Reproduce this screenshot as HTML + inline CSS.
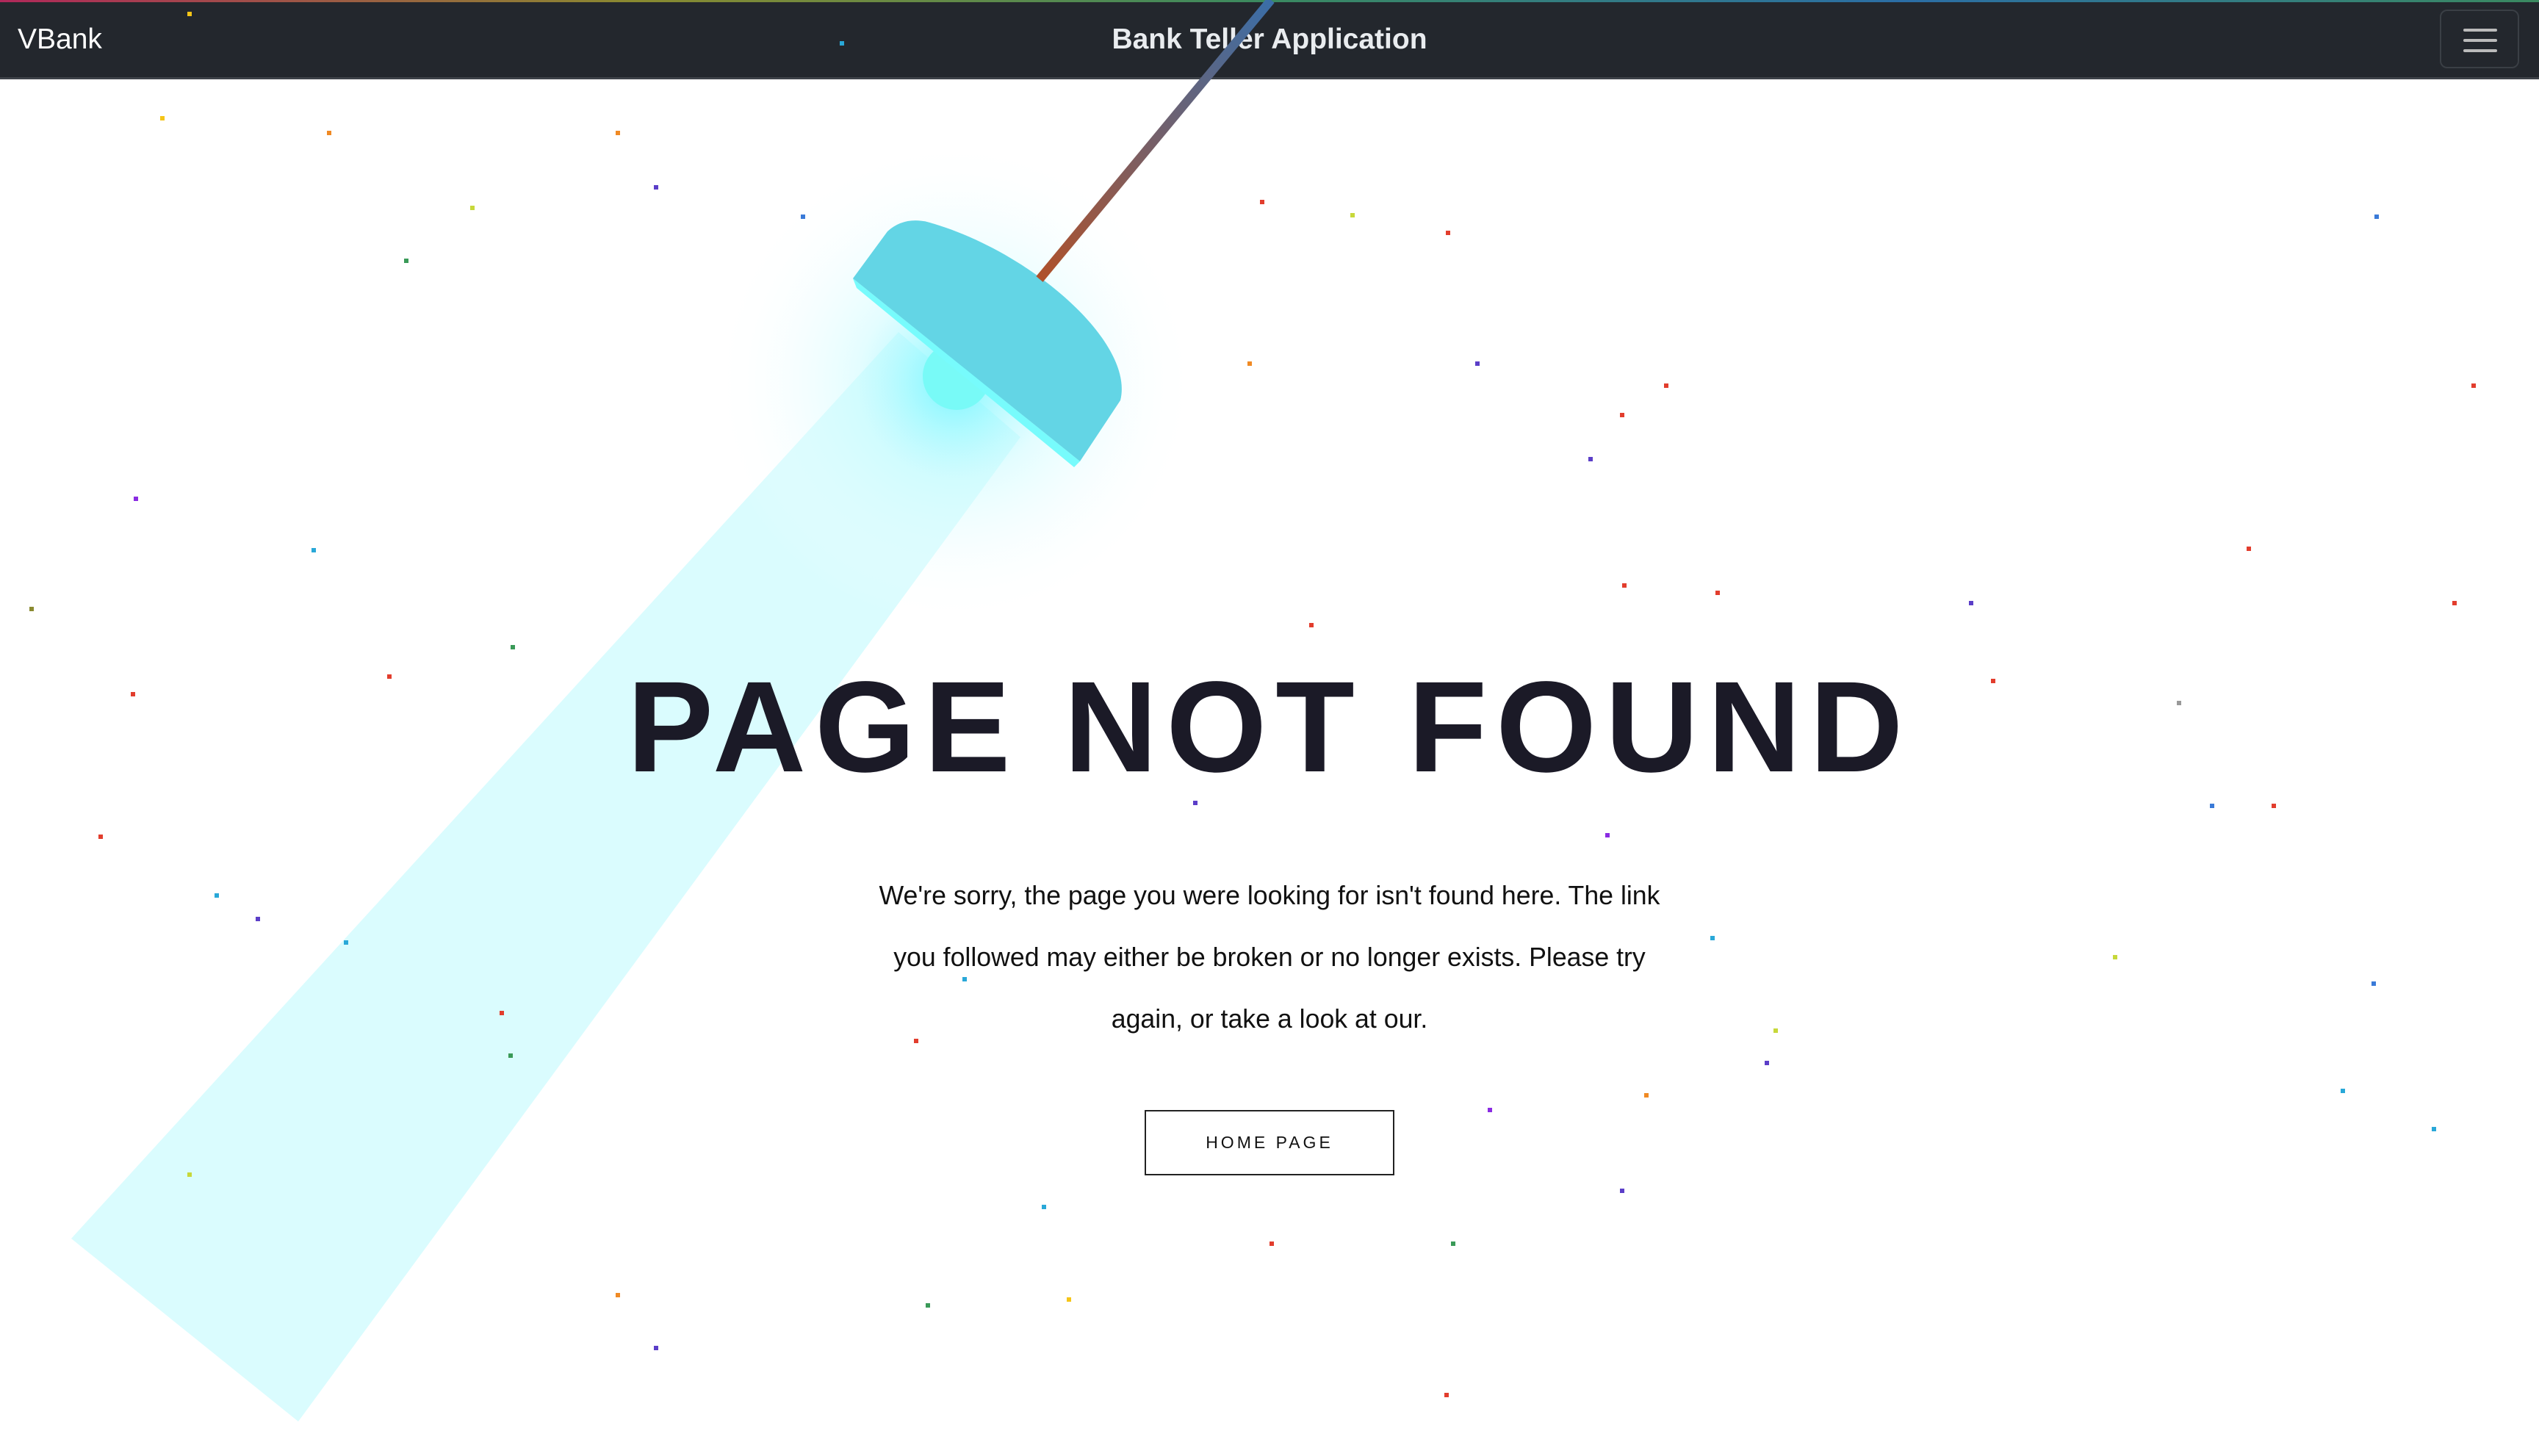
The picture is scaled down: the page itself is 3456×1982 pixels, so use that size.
<!DOCTYPE html>
<html><head><meta charset="utf-8"><style>
html,body{margin:0;padding:0;width:3456px;height:1982px;overflow:hidden;background:#fff;font-family:"Liberation Sans",sans-serif;position:relative}
nav{position:absolute;left:0;top:0;width:3456px;height:108px;background:#23272d;border-bottom:3px solid #3d4248;box-sizing:border-box}
nav .top{position:absolute;left:0;top:0;width:100%;height:3px;background:linear-gradient(90deg,#b0285a,#8a8a30,#3a8a60,#2b6ea6,#3a8a60)}
.brand{position:absolute;left:24px;top:32px;color:#fff;font-size:39px}
.title{position:absolute;left:0;width:100%;top:32px;text-align:center;color:#e9ecef;font-size:39px;font-weight:bold}
.ham{position:absolute;left:3321px;top:13px;width:108px;height:80px;border:2px solid #3a3f45;border-radius:10px;box-sizing:border-box}
.ham i{position:absolute;left:30px;width:46px;height:4px;background:#bbb;border-radius:2px}
svg{position:absolute;left:0;top:0}
h1{position:absolute;left:0;width:3456px;top:885px;margin:0;text-align:center;font-size:176px;font-weight:bold;letter-spacing:12px;color:#1b1a27;line-height:1.2}
p{position:absolute;left:1178px;width:1100px;top:1177px;margin:0;text-align:center;font-size:35.7px;line-height:84px;color:#111}
.btn{position:absolute;left:1558px;top:1511px;width:340px;height:89px;border:2px solid #222;box-sizing:border-box;text-align:center;line-height:85px;font-size:23px;letter-spacing:4px;color:#111}
</style></head><body>
<svg width="3456" height="1982">
<defs>
<radialGradient id="g" cx="1300" cy="520" r="330" gradientUnits="userSpaceOnUse"><stop offset="0" stop-color="#6ff6ff" stop-opacity="0.9"/><stop offset="0.4" stop-color="#c8fbff" stop-opacity="0.5"/><stop offset="1" stop-color="#fff" stop-opacity="0"/></radialGradient>
</defs>
<polygon points="1223,452 1389,595 406,1935 97,1686" fill="#dafcfe"/>
<circle cx="1300" cy="520" r="330" fill="url(#g)"/>
<circle cx="1302" cy="512" r="46" fill="#78faf7"/>
<path d="M1161,379 L1470,628 L1462,636 L1166,392 Z" fill="#77fbfc"/>
<path d="M1161,379 L1208,315 Q1230,295 1262,302 C1400,340 1545,465 1525,545 L1470,628 Z" fill="#63d5e5"/>
</svg>
<nav><div class="top"></div><div class="brand">VBank</div><div class="title">Bank Teller Application</div>
<div class="ham"><i style="top:24px"></i><i style="top:38px"></i><i style="top:52px"></i></div></nav>
<svg width="3456" height="400" style="pointer-events:none">
<defs><linearGradient id="c" x1="1730" y1="0" x2="1415" y2="382" gradientUnits="userSpaceOnUse"><stop offset="0" stop-color="#3a6ea8"/><stop offset="1" stop-color="#b0512a"/></linearGradient></defs>
<line x1="1730" y1="0" x2="1415" y2="380" stroke="url(#c)" stroke-width="12"/>
</svg>
<h1>PAGE NOT FOUND</h1>
<p>We're sorry, the page you were looking for isn't found here. The link you followed may either be broken or no longer exists. Please try again, or take a look at our.</p>
<div class="btn">HOME PAGE</div>
<svg width="3456" height="1982" style="pointer-events:none">
<g>
<rect x="255" y="16" width="6" height="6" fill="#f5c518"/><rect x="1143" y="56" width="6" height="6" fill="#29a8d8"/>
<rect x="218" y="158" width="6" height="6" fill="#f5c518"/><rect x="445" y="178" width="6" height="6" fill="#f08a24"/><rect x="838" y="178" width="6" height="6" fill="#f08a24"/><rect x="890" y="252" width="6" height="6" fill="#5b3ec8"/><rect x="550" y="352" width="6" height="6" fill="#3a9a58"/><rect x="640" y="280" width="6" height="6" fill="#c7d83a"/><rect x="1715" y="272" width="6" height="6" fill="#e23d2d"/><rect x="1838" y="290" width="6" height="6" fill="#c7d83a"/><rect x="1968" y="314" width="6" height="6" fill="#e23d2d"/><rect x="2008" y="492" width="6" height="6" fill="#5b3ec8"/><rect x="1698" y="492" width="6" height="6" fill="#f08a24"/><rect x="2265" y="522" width="6" height="6" fill="#e23d2d"/><rect x="2205" y="562" width="6" height="6" fill="#e23d2d"/><rect x="2162" y="622" width="6" height="6" fill="#5b3ec8"/><rect x="3364" y="522" width="6" height="6" fill="#e23d2d"/><rect x="3058" y="744" width="6" height="6" fill="#e23d2d"/><rect x="3338" y="818" width="6" height="6" fill="#e23d2d"/><rect x="2680" y="818" width="6" height="6" fill="#5b3ec8"/><rect x="2335" y="804" width="6" height="6" fill="#e23d2d"/><rect x="2208" y="794" width="6" height="6" fill="#e23d2d"/><rect x="1782" y="848" width="6" height="6" fill="#e23d2d"/><rect x="182" y="676" width="6" height="6" fill="#8a2be2"/><rect x="424" y="746" width="6" height="6" fill="#29a8d8"/><rect x="178" y="942" width="6" height="6" fill="#e23d2d"/><rect x="527" y="918" width="6" height="6" fill="#e23d2d"/><rect x="695" y="878" width="6" height="6" fill="#3a9a58"/><rect x="2710" y="924" width="6" height="6" fill="#e23d2d"/><rect x="2963" y="954" width="6" height="6" fill="#999"/><rect x="3008" y="1094" width="6" height="6" fill="#3a7ad8"/><rect x="3092" y="1094" width="6" height="6" fill="#e23d2d"/><rect x="1624" y="1090" width="6" height="6" fill="#5b3ec8"/><rect x="2185" y="1134" width="6" height="6" fill="#8a2be2"/><rect x="2328" y="1274" width="6" height="6" fill="#29a8d8"/><rect x="1310" y="1330" width="6" height="6" fill="#29a8d8"/><rect x="1244" y="1414" width="6" height="6" fill="#e23d2d"/><rect x="2414" y="1400" width="6" height="6" fill="#c7d83a"/><rect x="2402" y="1444" width="6" height="6" fill="#5b3ec8"/><rect x="2025" y="1508" width="6" height="6" fill="#8a2be2"/><rect x="2238" y="1488" width="6" height="6" fill="#f08a24"/><rect x="2205" y="1618" width="6" height="6" fill="#5b3ec8"/><rect x="1728" y="1690" width="6" height="6" fill="#e23d2d"/><rect x="1975" y="1690" width="6" height="6" fill="#3a9a58"/><rect x="1418" y="1640" width="6" height="6" fill="#29a8d8"/><rect x="1260" y="1774" width="6" height="6" fill="#3a9a58"/><rect x="1452" y="1766" width="6" height="6" fill="#f5c518"/><rect x="890" y="1832" width="6" height="6" fill="#5b3ec8"/><rect x="838" y="1760" width="6" height="6" fill="#f08a24"/><rect x="1966" y="1896" width="6" height="6" fill="#e23d2d"/><rect x="3186" y="1482" width="6" height="6" fill="#29a8d8"/><rect x="3310" y="1534" width="6" height="6" fill="#29a8d8"/><rect x="3228" y="1336" width="6" height="6" fill="#3a7ad8"/><rect x="2876" y="1300" width="6" height="6" fill="#c7d83a"/><rect x="348" y="1248" width="6" height="6" fill="#5b3ec8"/><rect x="292" y="1216" width="6" height="6" fill="#29a8d8"/><rect x="134" y="1136" width="6" height="6" fill="#e23d2d"/><rect x="468" y="1280" width="6" height="6" fill="#29a8d8"/><rect x="680" y="1376" width="6" height="6" fill="#e23d2d"/><rect x="692" y="1434" width="6" height="6" fill="#3a9a58"/><rect x="255" y="1596" width="6" height="6" fill="#c7d83a"/><rect x="40" y="826" width="6" height="6" fill="#8a8a30"/><rect x="3232" y="292" width="6" height="6" fill="#3a7ad8"/><rect x="1090" y="292" width="6" height="6" fill="#3a7ad8"/>
</g></svg>
</body></html>
